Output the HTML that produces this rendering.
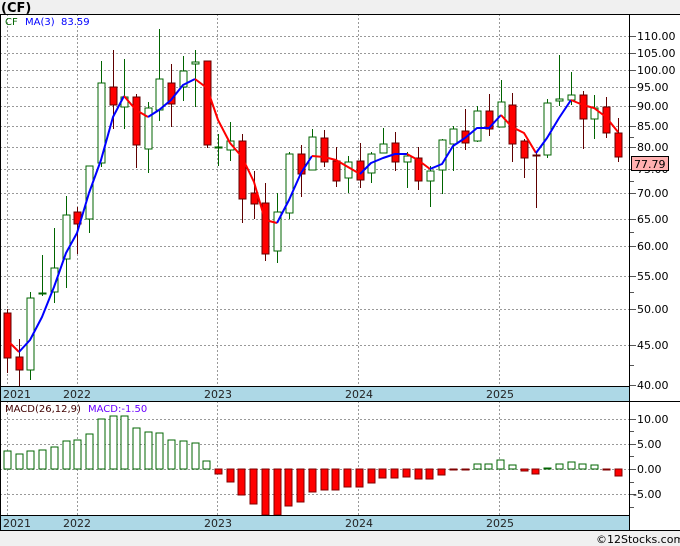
<!DOCTYPE html>
<html><head><meta charset="utf-8"><style>
html,body{margin:0;padding:0;background:#f0f0f0;}
svg{display:block;font-family:"DejaVu Sans","Liberation Sans",sans-serif;}
</style></head><body>
<svg width="680" height="546" viewBox="0 0 680 546" xmlns="http://www.w3.org/2000/svg">
<rect x="0" y="0" width="680" height="546" fill="#f0f0f0"/>
<rect x="0" y="14" width="680" height="517" fill="#fff"/>
<text x="1" y="12" font-size="13" font-weight="bold" fill="#000">(CF)</text>
<g stroke="#999" stroke-width="1" stroke-dasharray="2,2">
<line x1="0" y1="36.5" x2="629" y2="36.5"/><line x1="0" y1="53.5" x2="629" y2="53.5"/><line x1="0" y1="70.5" x2="629" y2="70.5"/><line x1="0" y1="87.5" x2="629" y2="87.5"/><line x1="0" y1="106.5" x2="629" y2="106.5"/><line x1="0" y1="126.5" x2="629" y2="126.5"/><line x1="0" y1="147.5" x2="629" y2="147.5"/><line x1="0" y1="169.5" x2="629" y2="169.5"/><line x1="0" y1="193.5" x2="629" y2="193.5"/><line x1="0" y1="219.5" x2="629" y2="219.5"/><line x1="0" y1="246.5" x2="629" y2="246.5"/><line x1="0" y1="276.5" x2="629" y2="276.5"/><line x1="0" y1="309.5" x2="629" y2="309.5"/><line x1="0" y1="345.5" x2="629" y2="345.5"/>
<line x1="7.5" y1="14" x2="7.5" y2="387"/><line x1="77.5" y1="14" x2="77.5" y2="387"/><line x1="217.5" y1="14" x2="217.5" y2="387"/><line x1="358.5" y1="14" x2="358.5" y2="387"/><line x1="499.5" y1="14" x2="499.5" y2="387"/>
<line x1="0" y1="419.5" x2="629" y2="419.5"/><line x1="0" y1="444.5" x2="629" y2="444.5"/><line x1="0" y1="469.5" x2="629" y2="469.5"/><line x1="0" y1="494.5" x2="629" y2="494.5"/>
<line x1="7.5" y1="401" x2="7.5" y2="515"/><line x1="77.5" y1="401" x2="77.5" y2="515"/><line x1="217.5" y1="401" x2="217.5" y2="515"/><line x1="358.5" y1="401" x2="358.5" y2="515"/><line x1="499.5" y1="401" x2="499.5" y2="515"/>
</g>
<text x="5" y="25" font-size="10" fill="#006400">CF</text>
<text x="25" y="25" font-size="10" fill="#0000ff">MA(3)</text>
<text x="61" y="25" font-size="10" fill="#0000ff">83.59</text>
<g stroke-width="1">
<g stroke="#600000" fill="#ff0000">
<line x1="7.5" y1="309" x2="7.5" y2="373"/><rect x="4" y="313" width="7" height="45"/>
<line x1="19.5" y1="339" x2="19.5" y2="387"/><rect x="16" y="357" width="7" height="13"/>
<line x1="77.5" y1="207" x2="77.5" y2="254"/><rect x="74" y="212" width="7" height="12"/>
<line x1="113.5" y1="50" x2="113.5" y2="129"/><rect x="110" y="87" width="7" height="18"/>
<line x1="136.5" y1="94" x2="136.5" y2="168"/><rect x="133" y="97" width="7" height="48"/>
<line x1="171.5" y1="64" x2="171.5" y2="127"/><rect x="168" y="83" width="7" height="21"/>
<line x1="207.5" y1="61" x2="207.5" y2="148"/><rect x="204" y="61" width="7" height="84"/>
<line x1="242.5" y1="134" x2="242.5" y2="223"/><rect x="239" y="141" width="7" height="58"/>
<line x1="254.5" y1="171" x2="254.5" y2="219"/><rect x="251" y="193" width="7" height="11"/>
<line x1="265.5" y1="183" x2="265.5" y2="261"/><rect x="262" y="203" width="7" height="51"/>
<line x1="301.5" y1="145" x2="301.5" y2="197"/><rect x="298" y="154" width="7" height="20"/>
<line x1="324.5" y1="130" x2="324.5" y2="167"/><rect x="321" y="138" width="7" height="24"/>
<line x1="336.5" y1="147" x2="336.5" y2="187"/><rect x="333" y="161" width="7" height="20"/>
<line x1="360.5" y1="143" x2="360.5" y2="188"/><rect x="357" y="161" width="7" height="19"/>
<line x1="395.5" y1="132" x2="395.5" y2="171"/><rect x="392" y="143" width="7" height="19"/>
<line x1="418.5" y1="147" x2="418.5" y2="190"/><rect x="415" y="158" width="7" height="23"/>
<line x1="465.5" y1="109" x2="465.5" y2="150"/><rect x="462" y="131" width="7" height="12"/>
<line x1="489.5" y1="94" x2="489.5" y2="136"/><rect x="486" y="111" width="7" height="18"/>
<line x1="512.5" y1="93" x2="512.5" y2="162"/><rect x="509" y="105" width="7" height="39"/>
<line x1="524.5" y1="139" x2="524.5" y2="178"/><rect x="521" y="141" width="7" height="17"/>
<line x1="536.5" y1="153" x2="536.5" y2="208"/><rect x="533" y="155" width="7" height="1"/>
<line x1="583.5" y1="91" x2="583.5" y2="149"/><rect x="580" y="95" width="7" height="24"/>
<line x1="606.5" y1="97" x2="606.5" y2="138"/><rect x="603" y="107" width="7" height="26"/>
<line x1="618.5" y1="118" x2="618.5" y2="162"/><rect x="615" y="133" width="7" height="24"/>
</g>
<g stroke="#006400" fill="#fff">
<line x1="30.5" y1="292" x2="30.5" y2="380"/><rect x="27" y="298" width="7" height="72"/>
<line x1="42.5" y1="255" x2="42.5" y2="296"/><rect x="39" y="293" width="7" height="1"/>
<line x1="54.5" y1="228" x2="54.5" y2="303"/><rect x="51" y="268" width="7" height="24"/>
<line x1="66.5" y1="196" x2="66.5" y2="288"/><rect x="63" y="215" width="7" height="44"/>
<line x1="89.5" y1="166" x2="89.5" y2="233"/><rect x="86" y="166" width="7" height="53"/>
<line x1="101.5" y1="61" x2="101.5" y2="167"/><rect x="98" y="83" width="7" height="80"/>
<line x1="124.5" y1="59" x2="124.5" y2="129"/><rect x="121" y="97" width="7" height="10"/>
<line x1="148.5" y1="102" x2="148.5" y2="173"/><rect x="145" y="108" width="7" height="41"/>
<line x1="159.5" y1="29" x2="159.5" y2="121"/><rect x="156" y="79" width="7" height="31"/>
<line x1="183.5" y1="56" x2="183.5" y2="101"/><rect x="180" y="71" width="7" height="16"/>
<line x1="195.5" y1="50" x2="195.5" y2="107"/><rect x="192" y="62" width="7" height="2"/>
<line x1="218.5" y1="134" x2="218.5" y2="166"/><rect x="215" y="147" width="7" height="1"/>
<line x1="230.5" y1="122" x2="230.5" y2="161"/><rect x="227" y="141" width="7" height="9"/>
<line x1="277.5" y1="193" x2="277.5" y2="263"/><rect x="274" y="212" width="7" height="39"/>
<line x1="289.5" y1="152" x2="289.5" y2="219"/><rect x="286" y="154" width="7" height="59"/>
<line x1="312.5" y1="129" x2="312.5" y2="170"/><rect x="309" y="137" width="7" height="33"/>
<line x1="348.5" y1="156" x2="348.5" y2="193"/><rect x="345" y="162" width="7" height="16"/>
<line x1="371.5" y1="152" x2="371.5" y2="183"/><rect x="368" y="154" width="7" height="19"/>
<line x1="383.5" y1="128" x2="383.5" y2="153"/><rect x="380" y="144" width="7" height="9"/>
<line x1="407.5" y1="152" x2="407.5" y2="188"/><rect x="404" y="156" width="7" height="6"/>
<line x1="430.5" y1="166" x2="430.5" y2="207"/><rect x="427" y="171" width="7" height="10"/>
<line x1="442.5" y1="139" x2="442.5" y2="194"/><rect x="439" y="140" width="7" height="30"/>
<line x1="453.5" y1="126" x2="453.5" y2="171"/><rect x="450" y="129" width="7" height="15"/>
<line x1="477.5" y1="106" x2="477.5" y2="142"/><rect x="474" y="111" width="7" height="30"/>
<line x1="501.5" y1="80" x2="501.5" y2="127"/><rect x="498" y="102" width="7" height="25"/>
<line x1="547.5" y1="99" x2="547.5" y2="158"/><rect x="544" y="103" width="7" height="52"/>
<line x1="559.5" y1="55" x2="559.5" y2="106"/><rect x="556" y="99" width="7" height="2"/>
<line x1="571.5" y1="72" x2="571.5" y2="105"/><rect x="568" y="95" width="7" height="5"/>
<line x1="594.5" y1="95" x2="594.5" y2="139"/><rect x="591" y="108" width="7" height="11"/>
</g>
</g>
<g fill="none" stroke-width="2" stroke-linejoin="round">
<polyline stroke="#ff0000" points="7,340 19,352"/>
<polyline stroke="#0000ff" points="19,352 30,340 42,317 54,287 66,253 77,233 89,193 101,160 113,117 124,96"/>
<polyline stroke="#ff0000" points="124,96 136,110 148,117"/>
<polyline stroke="#0000ff" points="148,117 159,110 171,100 183,85 195,79"/>
<polyline stroke="#ff0000" points="195,79 207,88 218,120 230,143 242,157 254,182 265,220 277,223"/>
<polyline stroke="#0000ff" points="277,223 289,200 301,173 312,156"/>
<polyline stroke="#ff0000" points="312,156 324,157 336,160 348,167 360,174"/>
<polyline stroke="#0000ff" points="360,174 371,163 383,158 395,154 407,154"/>
<polyline stroke="#ff0000" points="407,154 418,160 430,169"/>
<polyline stroke="#0000ff" points="430,169 442,164 453,146 465,138 477,128 489,128 501,115"/>
<polyline stroke="#ff0000" points="501,115 512,127 524,133 536,153"/>
<polyline stroke="#0000ff" points="536,153 547,138 559,118 571,100"/>
<polyline stroke="#ff0000" points="571,100 583,105 594,108 606,117 618,132"/>
</g>
<g stroke="#006400" fill="#fff">
<rect x="4" y="451" width="7" height="18"/><rect x="16" y="454" width="7" height="15"/><rect x="27" y="451" width="7" height="18"/><rect x="39" y="450" width="7" height="19"/><rect x="51" y="447" width="7" height="22"/><rect x="63" y="441" width="7" height="28"/><rect x="74" y="440" width="7" height="29"/><rect x="86" y="434" width="7" height="35"/><rect x="98" y="419" width="7" height="50"/><rect x="110" y="416" width="7" height="53"/><rect x="121" y="416" width="7" height="53"/><rect x="133" y="428" width="7" height="41"/><rect x="145" y="432" width="7" height="37"/><rect x="156" y="433" width="7" height="36"/><rect x="168" y="440" width="7" height="29"/><rect x="180" y="441" width="7" height="28"/><rect x="192" y="443" width="7" height="26"/><rect x="203" y="461" width="7" height="8"/>
<rect x="474" y="464" width="7" height="5"/><rect x="485" y="464" width="7" height="5"/><rect x="497" y="460" width="7" height="9"/><rect x="509" y="465" width="7" height="4"/><rect x="544" y="468" width="7" height="1"/><rect x="556" y="464" width="7" height="5"/><rect x="568" y="462" width="7" height="7"/><rect x="579" y="464" width="7" height="5"/><rect x="591" y="465" width="7" height="4"/>
</g>
<g stroke="#800000" fill="#ff0000">
<rect x="215" y="469" width="7" height="5"/><rect x="227" y="469" width="7" height="13"/><rect x="238" y="469" width="7" height="26"/><rect x="250" y="469" width="7" height="35"/><rect x="262" y="469" width="7" height="46"/><rect x="274" y="469" width="7" height="46"/><rect x="285" y="469" width="7" height="37"/><rect x="297" y="469" width="7" height="33"/><rect x="309" y="469" width="7" height="23"/><rect x="321" y="469" width="7" height="21"/><rect x="332" y="469" width="7" height="21"/><rect x="344" y="469" width="7" height="18"/><rect x="356" y="469" width="7" height="18"/><rect x="368" y="469" width="7" height="14"/><rect x="379" y="469" width="7" height="9"/><rect x="391" y="469" width="7" height="9"/><rect x="403" y="469" width="7" height="8"/><rect x="415" y="469" width="7" height="10"/><rect x="426" y="469" width="7" height="10"/><rect x="438" y="469" width="7" height="6"/><rect x="450" y="469" width="7" height="1"/><rect x="462" y="469" width="7" height="1"/><rect x="521" y="469" width="7" height="2"/><rect x="532" y="469" width="7" height="5"/><rect x="603" y="469" width="7" height="1"/><rect x="615" y="469" width="7" height="7"/>
</g>
<text x="5" y="412" font-size="10" fill="#400000">MACD(26,12,9)</text>
<text x="88" y="412" font-size="10" fill="#6a00ff">MACD:-1.50</text>
<rect x="0" y="387" width="629" height="14" fill="#add8e6"/>
<rect x="0" y="516" width="629" height="14" fill="#add8e6"/>
<g stroke="#000" stroke-width="1" fill="none">
<line x1="0" y1="386.5" x2="629" y2="386.5"/><line x1="0" y1="401.5" x2="680" y2="401.5"/>
<line x1="0" y1="515.5" x2="629" y2="515.5"/><line x1="0" y1="530.5" x2="680" y2="530.5"/>
<line x1="0" y1="14.5" x2="680" y2="14.5"/>
<line x1="0.5" y1="14" x2="0.5" y2="531"/><line x1="629.5" y1="14" x2="629.5" y2="531"/>
</g>
<g font-size="11" fill="#222">
<text x="3" y="398">2021</text><text x="63" y="398">2022</text><text x="204" y="398">2023</text><text x="345" y="398">2024</text><text x="486" y="398">2025</text>
<text x="3" y="527">2021</text><text x="63" y="527">2022</text><text x="204" y="527">2023</text><text x="345" y="527">2024</text><text x="486" y="527">2025</text>
</g>
<g stroke="#555" stroke-width="1">
<line x1="630" y1="36.5" x2="636" y2="36.5"/><line x1="630" y1="53.5" x2="636" y2="53.5"/><line x1="630" y1="70.5" x2="636" y2="70.5"/><line x1="630" y1="87.5" x2="636" y2="87.5"/><line x1="630" y1="106.5" x2="636" y2="106.5"/><line x1="630" y1="126.5" x2="636" y2="126.5"/><line x1="630" y1="147.5" x2="636" y2="147.5"/><line x1="630" y1="169.5" x2="636" y2="169.5"/><line x1="630" y1="193.5" x2="636" y2="193.5"/><line x1="630" y1="219.5" x2="636" y2="219.5"/><line x1="630" y1="246.5" x2="636" y2="246.5"/><line x1="630" y1="276.5" x2="636" y2="276.5"/><line x1="630" y1="309.5" x2="636" y2="309.5"/><line x1="630" y1="345.5" x2="636" y2="345.5"/><line x1="630" y1="385.5" x2="636" y2="385.5"/>
<line x1="630" y1="137.5" x2="634" y2="137.5"/><line x1="630" y1="181.5" x2="634" y2="181.5"/><line x1="630" y1="232.5" x2="634" y2="232.5"/><line x1="630" y1="292.5" x2="634" y2="292.5"/><line x1="630" y1="365.5" x2="634" y2="365.5"/>
<line x1="630" y1="419.5" x2="636" y2="419.5"/><line x1="630" y1="444.5" x2="636" y2="444.5"/><line x1="630" y1="469.5" x2="636" y2="469.5"/><line x1="630" y1="494.5" x2="636" y2="494.5"/>
<line x1="630" y1="431.5" x2="634" y2="431.5"/><line x1="630" y1="456.5" x2="634" y2="456.5"/><line x1="630" y1="482.5" x2="634" y2="482.5"/><line x1="630" y1="507.5" x2="634" y2="507.5"/>
</g>
<g font-size="11" fill="#000">
<text x="637" y="40">110.00</text><text x="637" y="57">105.00</text><text x="637" y="74">100.00</text><text x="637" y="91">95.00</text><text x="637" y="110">90.00</text><text x="637" y="130">85.00</text><text x="637" y="151">80.00</text><text x="637" y="173">75.00</text><text x="637" y="197">70.00</text><text x="637" y="223">65.00</text><text x="637" y="250">60.00</text><text x="637" y="280">55.00</text><text x="637" y="313">50.00</text><text x="637" y="349">45.00</text><text x="637" y="389">40.00</text>
<text x="637" y="423">10.00</text><text x="637" y="448">5.00</text><text x="637" y="473">0.00</text><text x="633" y="498">-5.00</text>
</g>
<rect x="631.5" y="156.5" width="37" height="14" fill="#ffb0b0" stroke="#000"/>
<text x="634" y="168" font-size="11" fill="#000">77.79</text>
<text x="596" y="543" font-size="11" fill="#000">©12Stocks.com</text>
</svg>
</body></html>
